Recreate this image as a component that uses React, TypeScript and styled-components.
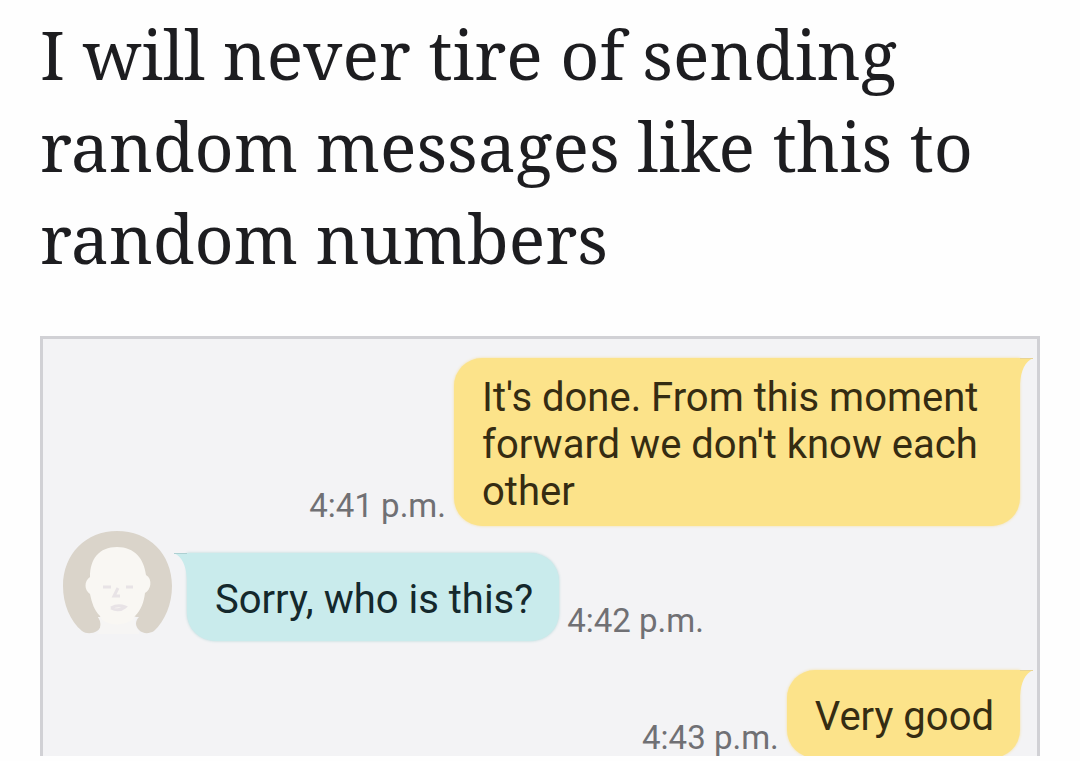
import React from "react";
import styled, { createGlobalStyle } from "styled-components";

const GlobalStyle = createGlobalStyle`
  * { box-sizing: border-box; }
  body { margin: 0; background: #fefefe; }
`;

const Page = styled.main`
  padding: 8px 40px 5px;
`;

const Caption = styled.h1`
  margin: 0 0 52px;
  color: #1d1d20;
  font: 400 68px/92px "Noto Serif", "Droid Serif", "DejaVu Serif Condensed", "DejaVu Serif", serif;
`;

const Chat = styled.section`
  display: flex;
  flex-direction: column;
  overflow: hidden;
  padding: 19px 17px 0 19px;
  border: 3px solid #d1d1d5;
  border-bottom: 0;
  background: #f3f3f5;
  font-family: Roboto, sans-serif;
`;

const Row = styled.div<{ $sent?: boolean; $gap?: number }>`
  display: flex;
  align-items: flex-end;
  justify-content: ${(p) => (p.$sent ? "flex-end" : "flex-start")};
  gap: 8px;
  margin-top: ${(p) => p.$gap ?? 0}px;
`;

const LastRow = styled(Row)`
  margin-bottom: -2px;
`;

const Bubble = styled.p<{ $sent?: boolean; $tall?: boolean }>`
  position: relative;
  max-width: 566px;
  margin: 0;
  padding: ${(p) => (p.$tall ? "16px 28px 11px" : "23px 26px 18px 28px")};
  border-radius: ${(p) => (p.$sent ? "28px 0 28px 28px" : "0 28px 28px 28px")};
  background: ${(p) => (p.$sent ? "#fce38a" : "#c9ebec")};
  box-shadow: 0 0 3px ${(p) => (p.$sent ? "#f5dfa0" : "#b4d6d8")};
  color: ${(p) => (p.$sent ? "#352c12" : "#14282c")};
  font-size: 40px;
  line-height: 47px;
`;

const Tail = styled.svg<{ $sent?: boolean }>`
  position: absolute;
  top: 0;
  ${(p) => (p.$sent ? "left: 100%;" : "right: 100%; transform: scaleX(-1);")}
`;

const Time = styled.time`
  color: #707074;
  font-size: 33px;
  line-height: 41px;
  white-space: nowrap;
`;

const Avatar = styled.svg`
  flex: none;
  align-self: flex-start;
  margin-right: 6px;
`;

const BubbleTail = ({ sent }: { sent?: boolean }) => (
  <Tail $sent={sent} width="14" height="26" viewBox="0 0 14 26" aria-hidden="true">
    <path d="M0 0H13C5 4 1 12 0 26Z" fill={sent ? "#fce38a" : "#c9ebec"} />
    <path d="M0 .5H13" stroke={sent ? "#e9d493" : "#add0d2"} />
  </Tail>
);

const Portrait = () => (
  <Avatar width="111" height="111" viewBox="0 0 111 111" role="img" aria-label="Contact">
    <path
      d="M20 101C8 91 1 74 1 56C1 24 24 1 55 1C87 1 110 24 110 56C110 74 103 91 92 101C87 104 81 104 77 100C73 96 73 91 77 87L36 87C40 92 40 98 35 101C30 104 24 104 20 101Z"
      fill="#dad4ca"
    />
    <path
      d="M55 17C73 17 82 29 84 45C91 49 89 60 83 63C82 72 79 80 73 86C70 96 63 101 55 101C47 101 41 96 38 86C32 80 30 73 28 64C22 60 22 51 28 47C28 29 37 17 55 17Z"
      fill="#f9f7f3"
    />
    <path d="M38 87C44 97 66 97 74 86C72 92 73 98 77 101V104H35C39 98 40 93 36 87Z" fill="#f6f5f4" />
    <path d="M41 57H49M64 57H71M56 58L52 66H58M49 78Q56 74 63 77Q57 82 49 78" fill="none" stroke="#e8e3e6" strokeWidth="3" />
  </Avatar>
);

export default function App() {
  return (
    <>
      <GlobalStyle />
      <Page>
        <Caption>I will never tire of sending random messages like this to random numbers</Caption>
        <Chat aria-label="Conversation">
          <Row $sent>
            <Time>4:41 p.m.</Time>
            <Bubble $sent $tall>
              It's done. From this moment forward we don't know each other
              <BubbleTail sent />
            </Bubble>
          </Row>
          <Row $gap={4}>
            <Portrait />
            <Bubble>
              Sorry, who is this?
              <BubbleTail />
            </Bubble>
            <Time>4:42 p.m.</Time>
          </Row>
          <LastRow $sent $gap={29}>
            <Time>4:43 p.m.</Time>
            <Bubble $sent>
              Very good
              <BubbleTail sent />
            </Bubble>
          </LastRow>
        </Chat>
      </Page>
    </>
  );
}
